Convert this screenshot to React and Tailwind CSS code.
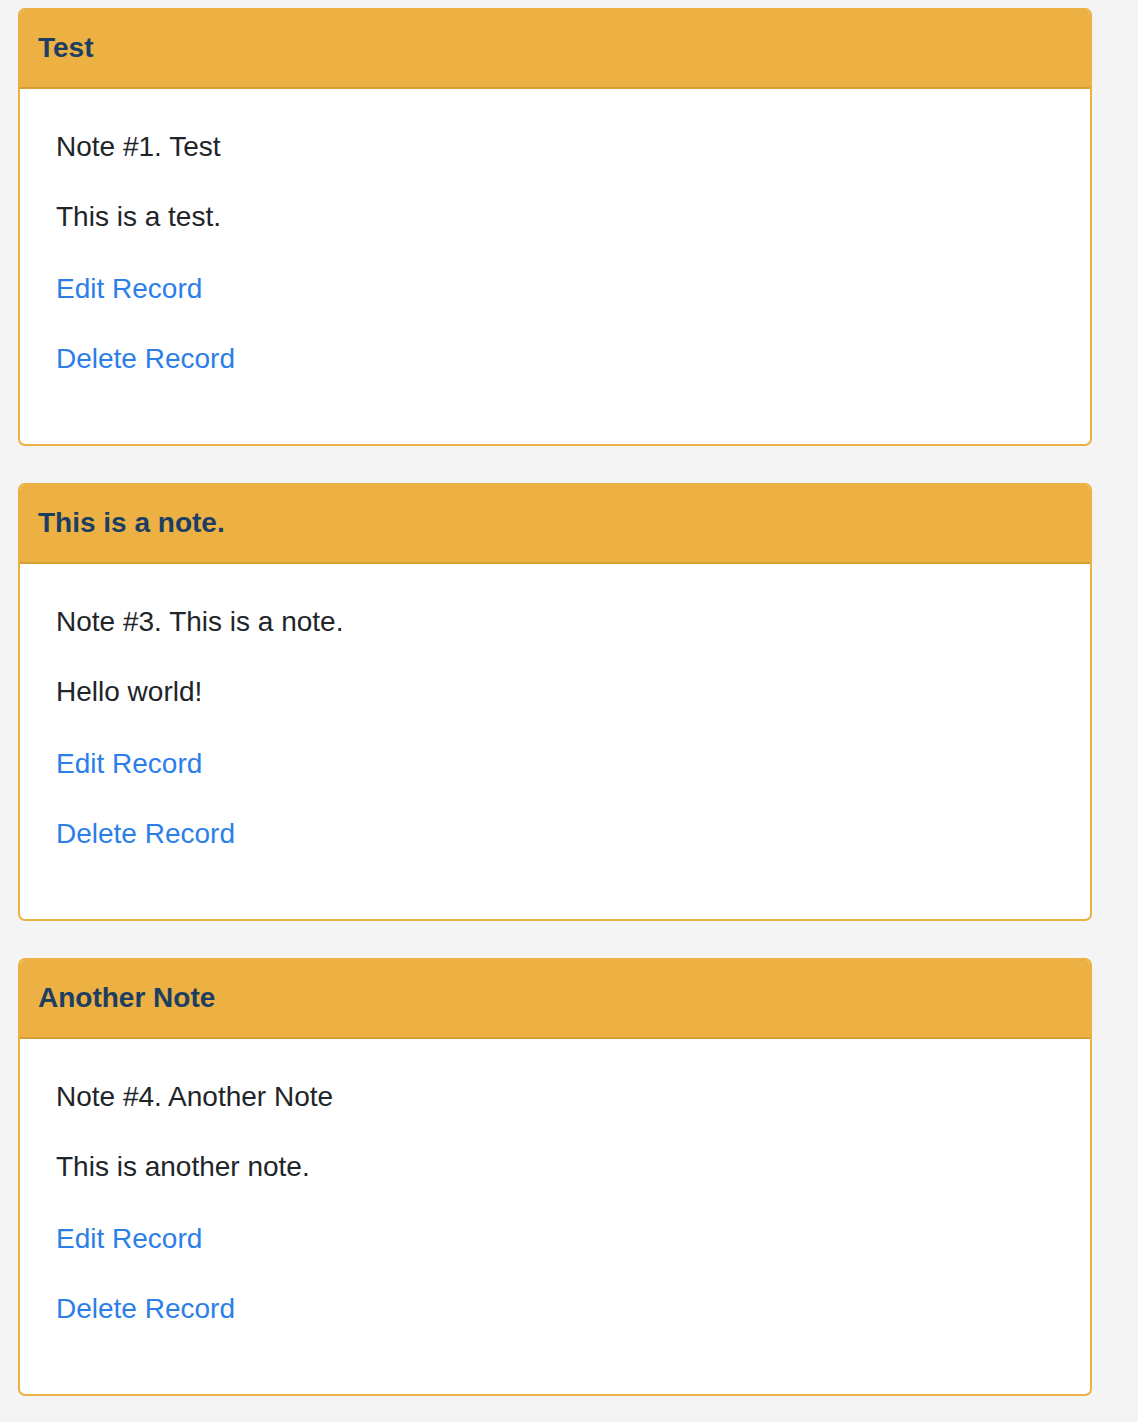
const notes = [
  { id: 1, title: "Test", body: "This is a test." },
  { id: 3, title: "This is a note.", body: "Hello world!" },
  { id: 4, title: "Another Note", body: "This is another note." },
];

const NoteCard = ({ note }) => (
  <div className="overflow-hidden rounded-[7px] border-2 border-[#ecb142] bg-white">
    {/* Header */}
    <div className="border-b-2 border-[#d39d38] bg-[#ecb142] px-[18px] pt-[17px] pb-[18px]">
      <h2 className="text-[28px] font-bold leading-[42px] text-[#1c3e62]">{note.title}</h2>
    </div>

    {/* Body */}
    <div className="px-[36px] pt-[37px] pb-[36px] text-[28px] leading-[42px] text-[#212529]">
      <p className="mb-[28px]">
        Note #{note.id}. {note.title}
      </p>
      <p className="mb-[30px]">{note.body}</p>
      <p className="mb-[28px]">
        <a href="#" className="text-[#2c7ee9]">Edit Record</a>
      </p>
      <p className="mb-[28px]">
        <a href="#" className="text-[#2c7ee9]">Delete Record</a>
      </p>
    </div>
  </div>
);

export default function App() {
  return (
    <div className="min-h-[1422px] bg-[#f4f4f4] pt-[8px] font-['Liberation_Sans',Arial,sans-serif]">
      <div className="ml-[18px] flex w-[1074px] flex-col gap-[37px]">
        {notes.map((note) => (
          <NoteCard key={note.id} note={note} />
        ))}
      </div>
    </div>
  );
}
